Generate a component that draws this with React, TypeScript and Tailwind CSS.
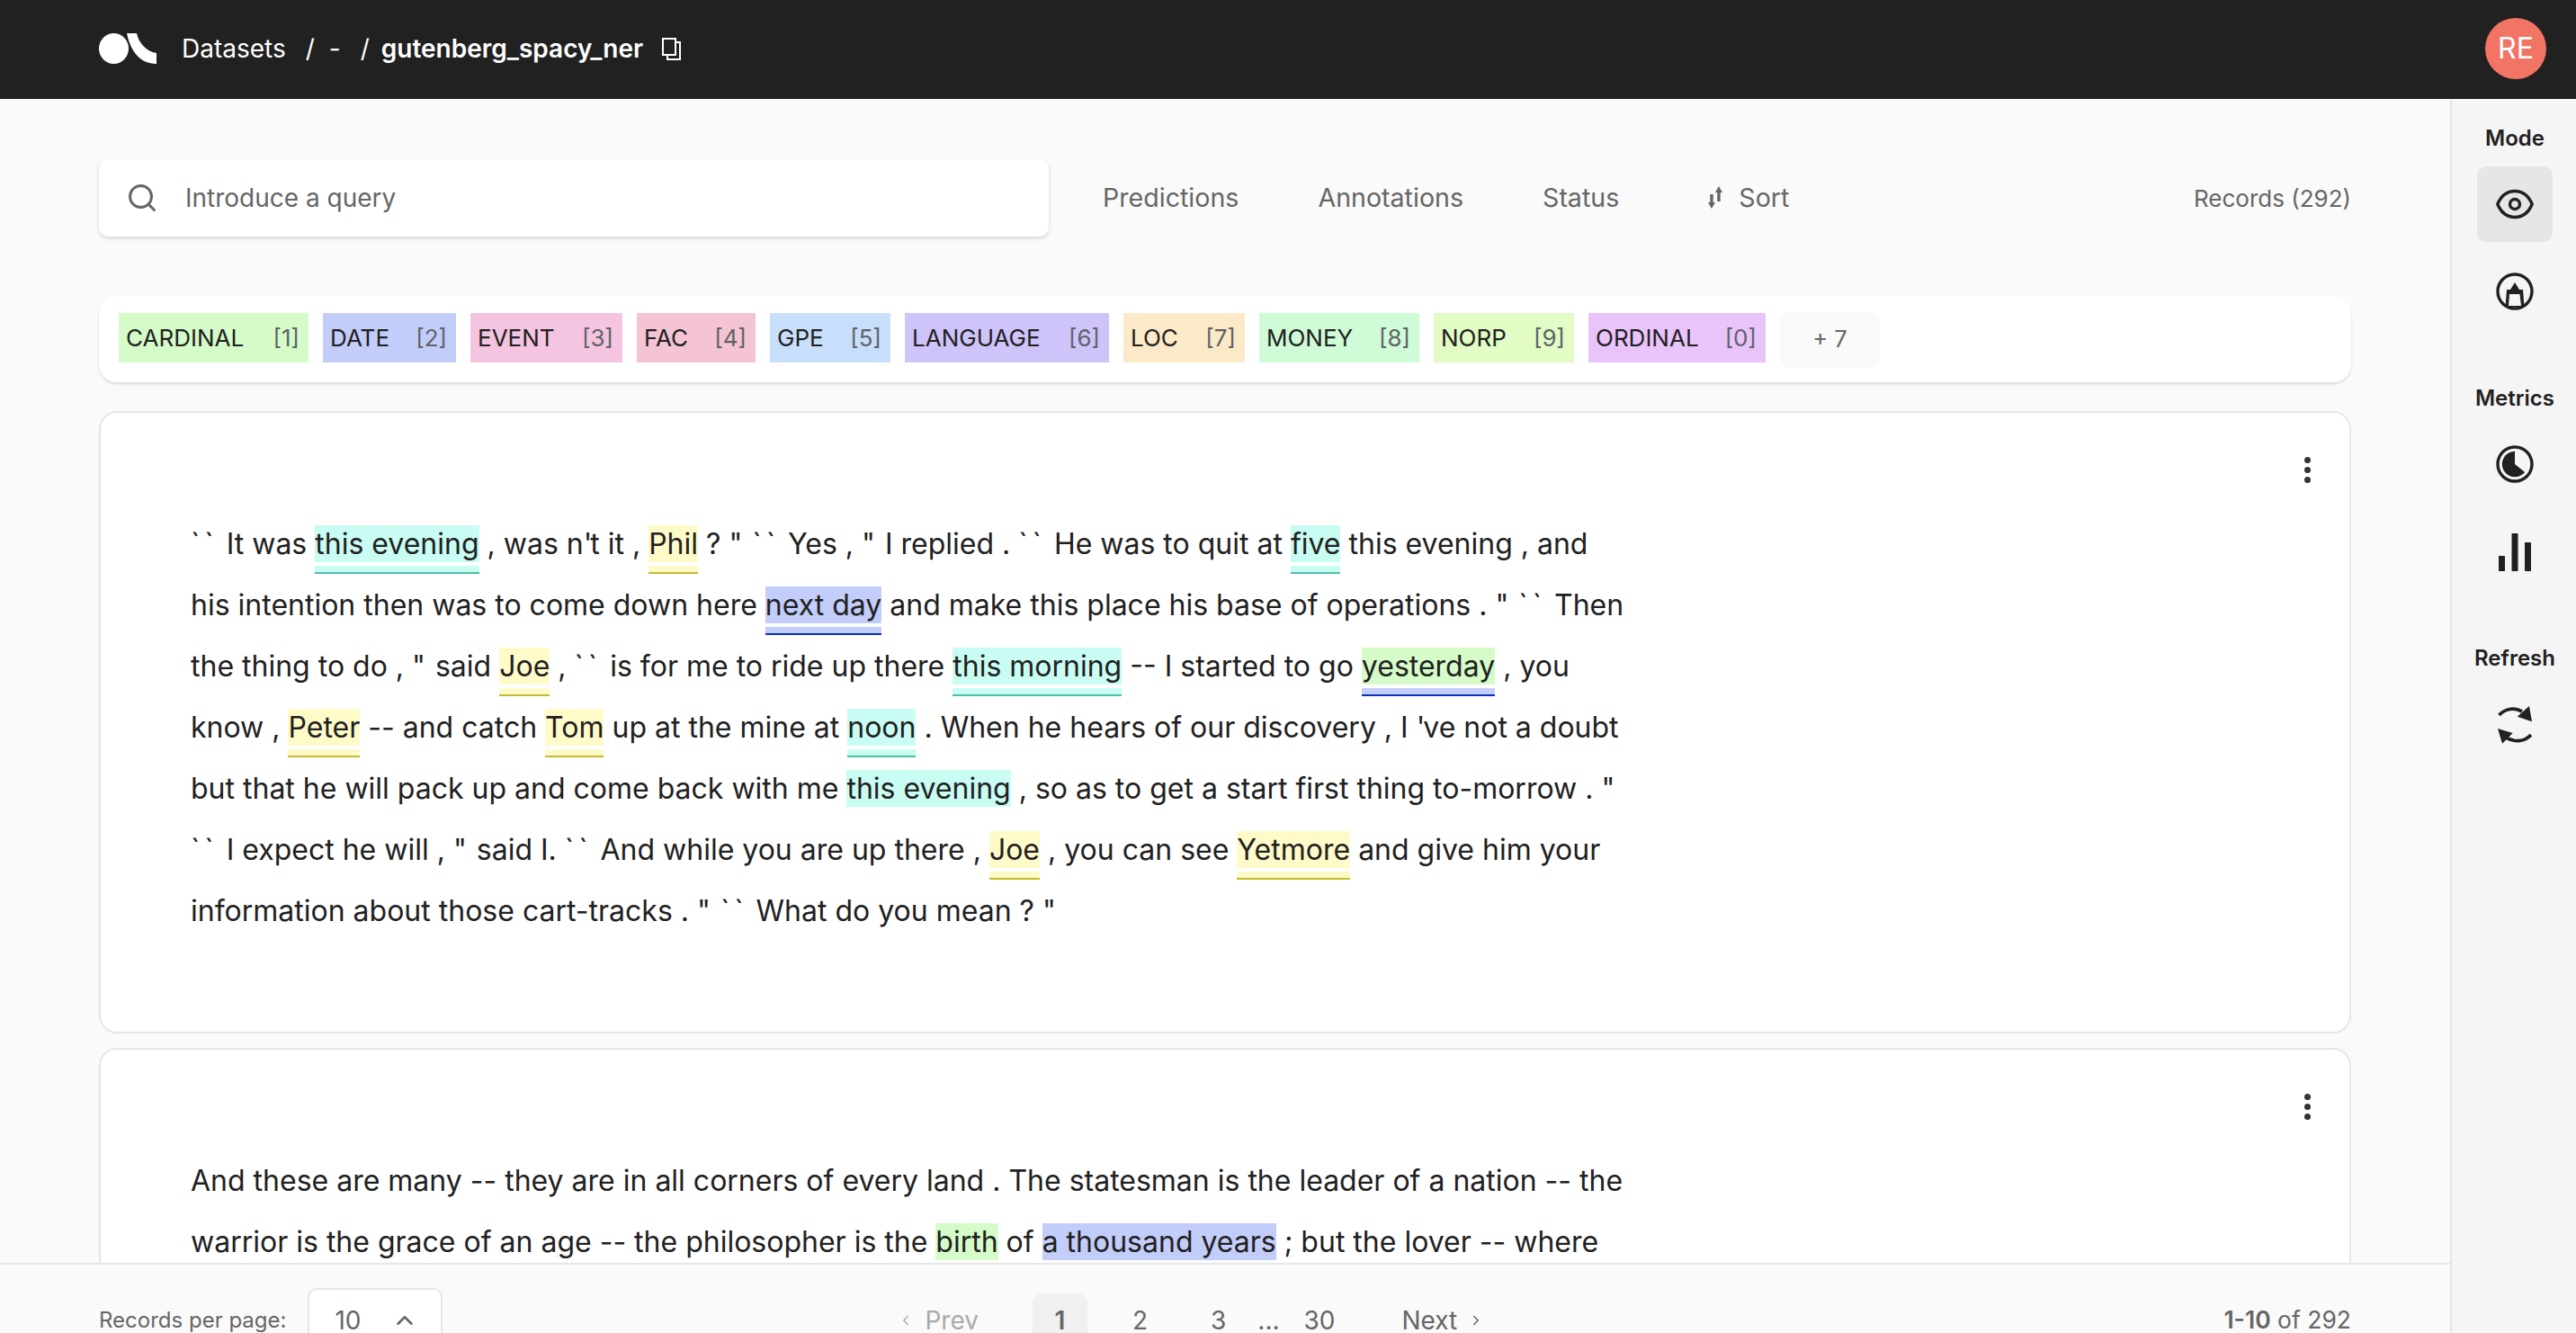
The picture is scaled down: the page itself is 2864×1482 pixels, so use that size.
import { ChevronLeft, ChevronRight, ChevronUp, Search } from 'lucide-react';

type Tone = 'time' | 'person' | 'date' | 'card';
type Piece = string | { text: string; tone: Tone; mark?: 'time' | 'person' | 'date' };

const ENTITIES = [
  { name: 'CARDINAL', key: '[1]', bg: 'bg-[#d5fcc8] w-[211px]' },
  { name: 'DATE', key: '[2]', bg: 'bg-[#c3cdfa] w-[148px]' },
  { name: 'EVENT', key: '[3]', bg: 'bg-[#f5c4e1] w-[169px]' },
  { name: 'FAC', key: '[4]', bg: 'bg-[#f5c4d2] w-[132px]' },
  { name: 'GPE', key: '[5]', bg: 'bg-[#c8dffc] w-[134px]' },
  { name: 'LANGUAGE', key: '[6]', bg: 'bg-[#cec4fa] w-[227px]' },
  { name: 'LOC', key: '[7]', bg: 'bg-[#fbe9c8] w-[135px]' },
  { name: 'MONEY', key: '[8]', bg: 'bg-[#cffcd7] w-[178px]' },
  { name: 'NORP', key: '[9]', bg: 'bg-[#e1fcc4] w-[156px]' },
  { name: 'ORDINAL', key: '[0]', bg: 'bg-[#e9c4fa] w-[197px]' },
];

const TONE_BG: Record<Tone, string> = {
  time: 'bg-[#c9fcf2]',
  person: 'bg-[#fffbc8]',
  date: 'bg-[#c3cdfa]',
  card: 'bg-[#d5fcc8]',
};

const MARK_STYLE = {
  time: 'bg-[#c9fcf2] border-[#4cc0a4]',
  person: 'bg-[#fffbc8] border-[#c8b92f]',
  date: 'bg-[#c3cdfa] border-[#0a2fbb]',
};

const RECORD_ONE: Piece[][] = [
  ['`` It was ', { text: 'this evening', tone: 'time', mark: 'time' }, ' , was n\'t it , ', { text: 'Phil', tone: 'person', mark: 'person' }, ' ? " `` Yes , " I replied . `` He was to quit at ', { text: 'five', tone: 'time', mark: 'time' }, ' this evening , and'],
  ['his intention then was to come down here ', { text: 'next day', tone: 'date', mark: 'date' }, ' and make this place his base of operations . " `` Then'],
  ['the thing to do , " said ', { text: 'Joe', tone: 'person', mark: 'person' }, ' , `` is for me to ride up there ', { text: 'this morning', tone: 'time', mark: 'time' }, ' -- I started to go ', { text: 'yesterday', tone: 'card', mark: 'date' }, ' , you'],
  ['know , ', { text: 'Peter', tone: 'person', mark: 'person' }, ' -- and catch ', { text: 'Tom', tone: 'person', mark: 'person' }, ' up at the mine at ', { text: 'noon', tone: 'time', mark: 'time' }, ' . When he hears of our discovery , I \'ve not a doubt'],
  ['but that he will pack up and come back with me ', { text: 'this evening', tone: 'time' }, ' , so as to get a start first thing to-morrow . "'],
  ['`` I expect he will , " said I. `` And while you are up there , ', { text: 'Joe', tone: 'person', mark: 'person' }, ' , you can see ', { text: 'Yetmore', tone: 'person', mark: 'person' }, ' and give him your'],
  ['information about those cart-tracks . " `` What do you mean ? "'],
];

const RECORD_TWO: Piece[][] = [
  ['And these are many -- they are in all corners of every land . The statesman is the leader of a nation -- the'],
  ['warrior is the grace of an age -- the philosopher is the ', { text: 'birth', tone: 'card' }, ' of ', { text: 'a thousand years', tone: 'date' }, ' ; but the lover -- where'],
];

// quotes and backticks run wider in the reference's Inter build than in the installed one
function Plain({ text }: { text: string }) {
  return (
    <>
      {text.split(/(``|"|')/).map((part, i) => {
        if (part === '``') return <span key={i} className="tracking-[5px]">{part}</span>;
        if (part === '"') return <span key={i} className="tracking-[2px]">{part}</span>;
        if (part === "'") return <span key={i} className="tracking-[-2px]">{part}</span>;
        return part;
      })}
    </>
  );
}

function RecordText({ lines }: { lines: Piece[][] }) {
  return (
    <div className="text-[32px] text-[#212121]">
      {lines.map((line, i) => (
        <div key={i} className="h-[68px] leading-[68px] whitespace-pre">
          {line.map((piece, j) =>
            typeof piece === 'string' ? (
              <Plain key={j} text={piece} />
            ) : (
              <span key={j} className={`relative inline-block h-[41px] leading-[41px] ${TONE_BG[piece.tone]}`}>
                {piece.text}
                {piece.mark && (
                  <span className={`absolute left-0 right-0 top-[45px] h-[9px] border-b-2 ${MARK_STYLE[piece.mark]}`} />
                )}
              </span>
            ),
          )}
        </div>
      ))}
    </div>
  );
}

function Dots() {
  return (
    <div className="flex flex-col gap-[4px]">
      <span className="h-[7px] w-[7px] rounded-full bg-[#333]" />
      <span className="h-[7px] w-[7px] rounded-full bg-[#333]" />
      <span className="h-[7px] w-[7px] rounded-full bg-[#333]" />
    </div>
  );
}

function EyeIcon() {
  return (
    <svg width="42" height="42" viewBox="0 0 42 42" fill="none" stroke="#212121" strokeWidth="3.4">
      <path d="M1.8 21C6 11 13 6.500 21 6.500S36 11 40.200 21C36 31 29 35.500 21 35.500S6 31 1.800 21Z" strokeLinejoin="round" />
      <circle cx="21" cy="21" r="5.500" />
    </svg>
  );
}

function AnnotateIcon() {
  return (
    <svg width="42" height="42" viewBox="0 0 42 42" fill="none">
      <circle cx="21" cy="21" r="19" stroke="#212121" strokeWidth="3.400" />
      <path d="M21 11l5 8H16z" fill="#212121" />
      <path fillRule="evenodd" d="M12 19h18l1.500 19h-21zM15 24l-1 13h14l-1.500-13z" fill="#212121" />
    </svg>
  );
}

function MetricsIcon() {
  return (
    <svg width="42" height="42" viewBox="0 0 42 42" fill="none">
      <circle cx="21" cy="21" r="19" stroke="#212121" strokeWidth="3.400" />
      <path d="M21 6.700A14.300 14.300 0 1 0 32.200 30L21 21Z" fill="#212121" />
    </svg>
  );
}

function BarsIcon() {
  return (
    <svg width="36" height="42" viewBox="0 0 36 42" fill="#212121">
      <rect x="0" y="25" width="7" height="17" />
      <rect x="14.500" y="0" width="7" height="42" />
      <rect x="29" y="10" width="7" height="32" />
    </svg>
  );
}

function RefreshIcon() {
  return (
    <svg width="38" height="42" viewBox="0 0 38 42" fill="#212121">
      <path d="M1.500 10C8 3 18 1 27 6" fill="none" stroke="#212121" strokeWidth="3.800" />
      <path d="M35 0l3 17.300-16.300-5.600z" />
      <path d="M37 32C30 39 20 41 9 35" fill="none" stroke="#212121" strokeWidth="3.800" />
      <path d="M0 25l16.700 5L5 41.700z" />
    </svg>
  );
}

function SortIcon() {
  return (
    <svg width="16" height="25" viewBox="0 0 16 25" fill="#666">
      <path d="M12 0l4 7h-2.300v10h-3.400V7H8z" />
      <path d="M4 25L0 18h2.300V9h3.400v9H8z" />
    </svg>
  );
}

function CopyIcon() {
  return (
    <svg width="21" height="25" viewBox="0 0 21 25" fill="none" stroke="#fff" strokeWidth="2">
      <rect x="1" y="1" width="14" height="18" />
      <path d="M15 5h5v19H6v-5" />
    </svg>
  );
}

function Logo() {
  return (
    <svg width="64" height="34" viewBox="0 0 64 34" fill="#fff">
      <ellipse cx="16.500" cy="17" rx="16.500" ry="17" />
      <path d="M31 0h11c2 10 10 20 22 22v12C46 34 35 20 31 0z" />
    </svg>
  );
}

function SideLabel({ text, className }: { text: string; className: string }) {
  return <div className={`text-center text-[24px] font-semibold leading-[32px] text-[#212121] ${className}`}>{text}</div>;
}

export default function App() {
  return (
    <div className="flex h-[1482px] flex-col overflow-hidden bg-[#fafafa] font-[Inter,sans-serif]">
      <header className="flex h-[110px] shrink-0 items-center bg-[#212121] pb-[2px] pl-[110px] pr-[33px] text-[28px] text-white">
        <Logo />
        <span className="ml-[28px]">Datasets</span>
        <span className="ml-[22px]">/</span>
        <span className="ml-[16px]">-</span>
        <span className="ml-[22px]">/</span>
        <span className="ml-[13px] font-semibold">gutenberg_spacy_ner</span>
        <span className="ml-[21px] flex"><CopyIcon /></span>
        <span className="ml-auto flex h-[68px] w-[68px] items-center justify-center rounded-full bg-[#f27465] text-[32px]">RE</span>
      </header>

      <div className="flex min-h-0 flex-1">
        <main className="flex min-w-0 flex-1 flex-col">
          <div className="min-h-0 flex-1 overflow-hidden pl-[110px] pr-[110px] pt-[67px]">
            <div className="flex h-[86px] items-center text-[28.6px] text-[#666]">
              <div className="flex h-[86px] w-[1056px] items-center rounded-[10px] bg-white pl-[30px] text-[28px] shadow-[0_2px_4px_rgba(0,0,0,0.15)]">
                <Search size={36} strokeWidth={2} className="text-[#666]" />
                <span className="ml-[30px]">Introduce a query</span>
              </div>
              <span className="ml-[60px]">Predictions</span>
              <span className="ml-[88px]">Annotations</span>
              <span className="ml-[88px]">Status</span>
              <span className="ml-[99px] flex items-center gap-[18px]"><SortIcon />Sort</span>
              <span className="ml-auto text-[26px]">Records (292)</span>
            </div>

            <div className="mt-[66px] flex h-[96px] items-center gap-[16px] rounded-[20px] bg-white pb-[3px] pl-[22px] shadow-[0_2px_3px_rgba(0,0,0,0.13)]">
              {ENTITIES.map((entity) => (
                <div key={entity.name} className={`flex h-[55px] items-center justify-between pl-[8px] pr-[10px] text-[26px] text-[#212121] ${entity.bg}`}>
                  <span>{entity.name}</span>
                  <span className="text-[#5f6368]">{entity.key}</span>
                </div>
              ))}
              <div className="mt-[4px] flex h-[62px] w-[111px] items-center justify-center rounded-[10px] bg-[#fafafa] text-[25.6px] text-[#666]">+ 7</div>
            </div>

            <article className="relative mt-[32px] h-[692px] rounded-[20px] border-2 border-[#e6e6e6] bg-white pl-[100px] pt-[112px]">
              <div className="absolute right-[43px] top-[49px]"><Dots /></div>
              <RecordText lines={RECORD_ONE} />
            </article>

            <article className="relative mt-[16px] h-[690px] rounded-[20px] border-2 border-[#e6e6e6] bg-white pl-[100px] pt-[112px]">
              <div className="absolute right-[43px] top-[49px]"><Dots /></div>
              <RecordText lines={RECORD_TWO} />
            </article>
          </div>

          <footer className="h-[78px] shrink-0 overflow-hidden border-t-2 border-[#e6e6e6]">
            <div className="flex h-[124px] items-center pl-[110px] pr-[110px] text-[26.5px] text-[#666]">
              <span className="text-[24px]">Records per page:</span>
              <div className="ml-[24px] flex h-[72px] w-[150px] shrink-0 items-center rounded-[10px] border-2 border-[#e6e6e6] bg-white pl-[28px] text-[28px]">
                10
                <ChevronUp size={30} strokeWidth={2} className="ml-[33px]" />
              </div>
              <div className="ml-[506px] flex items-center text-[28px]">
                <span className="flex items-center gap-[12px] text-[#aaa]"><ChevronLeft size={18} />Prev</span>
                <span className="ml-[60px] flex h-[60px] w-[61px] items-center justify-center rounded-[10px] bg-[#f0f0f0] font-semibold">1</span>
                <span className="ml-[50px]">2</span>
                <span className="ml-[70px]">3</span>
                <span className="ml-[35px]">...</span>
                <span className="ml-[27px]">30</span>
                <span className="ml-[74px] flex items-center gap-[12px]">Next<ChevronRight size={18} /></span>
              </div>
              <span className="ml-auto"><b className="font-semibold">1-10</b> of 292</span>
            </div>
          </footer>
        </main>

        <aside className="flex w-[140px] shrink-0 flex-col items-center border-l-2 border-[#e6e6e6] bg-[#f5f5f5] pl-[2px] pt-[28px]">
          <SideLabel text="Mode" className="" />
          <button className="mt-[15px] flex h-[84px] w-[84px] items-center justify-center rounded-[10px] bg-[#e6e6e6]"><EyeIcon /></button>
          <div className="mt-[34px] flex"><AnnotateIcon /></div>
          <SideLabel text="Metrics" className="mt-[82px]" />
          <div className="mt-[36px] flex"><MetricsIcon /></div>
          <div className="mt-[56px] flex"><BarsIcon /></div>
          <SideLabel text="Refresh" className="mt-[81px]" />
          <div className="mt-[37px] flex"><RefreshIcon /></div>
        </aside>
      </div>
    </div>
  );
}
